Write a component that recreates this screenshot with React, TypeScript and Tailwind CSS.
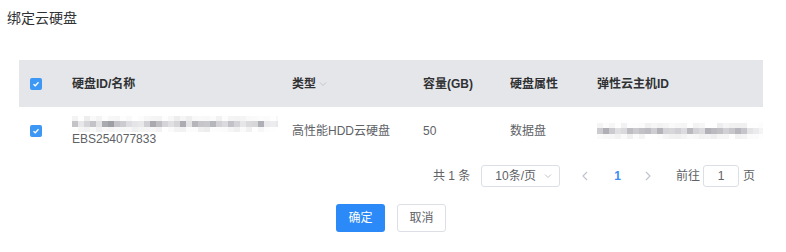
import React from "react";

const font = { fontFamily: '"Liberation Sans", "Noto Sans CJK SC", Arial, sans-serif' };

function Check() {
  return (
    <span className="inline-flex h-[12px] w-[12px] items-center justify-center rounded-[2px] bg-[#3d97f5]">
      <svg width="8" height="8" viewBox="0 0 8 8">
        <path d="M1.5 4.2 L3.3 5.8 L6.5 2.3" stroke="white" strokeWidth="1.3" fill="none" />
      </svg>
    </span>
  );
}

function Mosaic({ width, height, seed, strength }: { width: number; height: number; seed: number; strength: number }) {
  const cell = 6;
  const cols = Math.ceil(width / cell);
  const rows = Math.ceil(height / cell);
  let s = seed;
  const rnd = () => {
    s = (s * 9301 + 49297) % 233280;
    return s / 233280;
  };
  const rects: React.ReactNode[] = [];
  for (let r = 0; r < rows; r++) {
    for (let c = 0; c < cols; c++) {
      const mid = r === 1;
      const base = mid ? 0.3 + rnd() * strength : rnd() * 0.18;
      const edge = c > cols - 4 ? 0.4 : 1;
      const a = Math.min(1, base * edge);
      const g = Math.round(140 + rnd() * 45);
      rects.push(
        <rect key={r + "-" + c} x={c * cell} y={r * cell - 1} width={cell} height={cell} fill={`rgb(${g},${g},${g + 8})`} opacity={a} />
      );
    }
  }
  return (
    <svg width={width} height={height} viewBox={`0 0 ${width} ${height}`}>
      {rects}
    </svg>
  );
}

export default function App() {
  return (
    <div className="h-[252px] w-[786px] bg-white text-[12px] text-[#606266]" style={font}>
      <div className="px-[7px] pt-[8px] text-[14px] leading-[20px] text-[#303133]">绑定云硬盘</div>
      <div className="ml-[19px] mt-[32px] w-[744px]">
        <div className="grid h-[47px] grid-cols-[53px_220px_131px_87px_87px_1fr] items-center bg-[#e5e6ea] font-bold text-[#303133]">
          <div className="flex pl-[11px]"><Check /></div>
          <div>硬盘ID/名称</div>
          <div className="flex items-center gap-[2px]">
            类型
            <svg width="10" height="10" viewBox="0 0 10 10" className="mt-[1px]">
              <path d="M2 3.5 L5 6.5 L8 3.5" stroke="#c0c4cc" strokeWidth="1" fill="none" />
            </svg>
          </div>
          <div>容量(GB)</div>
          <div>硬盘属性</div>
          <div>弹性云主机ID</div>
        </div>
        <div className="grid h-[48px] grid-cols-[53px_220px_131px_87px_87px_1fr] items-center">
          <div className="flex pl-[11px]"><Check /></div>
          <div className="flex flex-col">
            <div className="h-[16px]"><Mosaic width={206} height={16} seed={17} strength={0.6} /></div>
            <span className="leading-[14px]">EBS254077833</span>
          </div>
          <div>高性能HDD云硬盘</div>
          <div>50</div>
          <div>数据盘</div>
          <div className="flex"><Mosaic width={166} height={16} seed={41} strength={0.5} /></div>
        </div>
      </div>
      <div className="mt-[10px] flex h-[22px] items-center pl-[433px] text-[#606266]">
        <span>共 1 条</span>
        <div className="ml-[11px] flex h-[22px] w-[79px] items-center justify-between rounded-[3px] border border-[#dcdfe6] pl-[13px] pr-[6px]">
          <span>10条/页</span>
          <svg width="10" height="10" viewBox="0 0 10 10">
            <path d="M2 3.5 L5 6.5 L8 3.5" stroke="#c0c4cc" strokeWidth="1" fill="none" />
          </svg>
        </div>
        <svg width="8" height="12" viewBox="0 0 8 12" className="ml-[21px]">
          <path d="M6 2 L2 6 L6 10" stroke="#c0c4cc" strokeWidth="1.2" fill="none" />
        </svg>
        <span className="ml-[25px] font-bold text-[#3d8ef5]">1</span>
        <svg width="8" height="12" viewBox="0 0 8 12" className="ml-[23px]">
          <path d="M2 2 L6 6 L2 10" stroke="#c0c4cc" strokeWidth="1.2" fill="none" />
        </svg>
        <span className="ml-[24px]">前往</span>
        <div className="ml-[3px] flex h-[22px] w-[36px] items-center justify-center rounded-[3px] border border-[#dcdfe6]">1</div>
        <span className="ml-[4px]">页</span>
      </div>
      <div className="mt-[17px] flex gap-[12px] pl-[336px]">
        <button className="h-[28px] w-[49px] rounded-[3px] bg-[#2b8af7] text-[12px] text-white">确定</button>
        <button className="h-[28px] w-[49px] rounded-[3px] border border-[#dcdfe6] bg-white text-[12px] text-[#606266]">取消</button>
      </div>
    </div>
  );
}
